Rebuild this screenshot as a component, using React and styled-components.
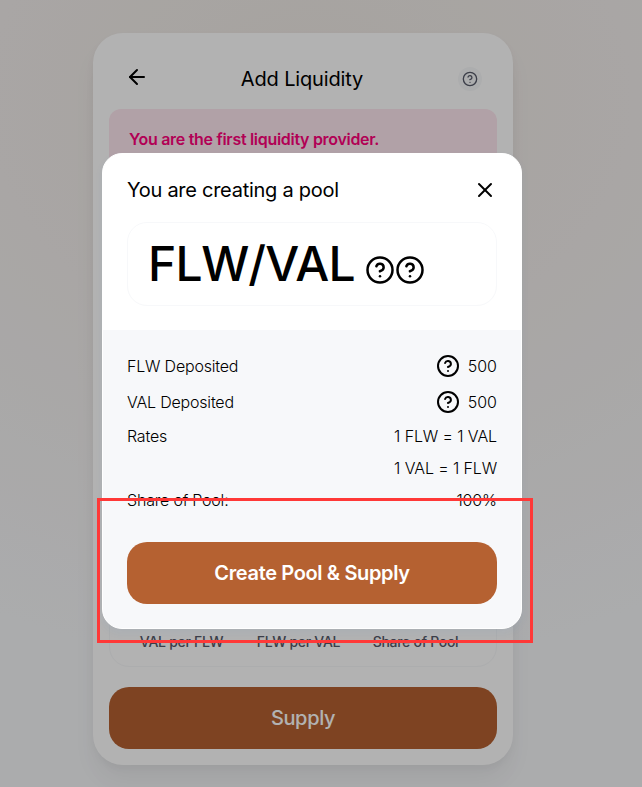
import React from "react";
import styled, { createGlobalStyle } from "styled-components";
import { ArrowLeft, CircleHelp, X } from "lucide-react";

const GlobalStyle = createGlobalStyle`
  * { box-sizing: border-box; }
  body { margin: 0; font-family: Inter, "Liberation Sans", sans-serif; color: #000; }
  button { font-family: inherit; border: 0; padding: 0; }
`;

const Page = styled.main`
  position: relative;
  width: 642px;
  height: 787px;
  overflow: hidden;
  padding: 33px 0 0 93px;
  background: radial-gradient(720px 570px at 310px 100px, #efe9e4 0%, #f2eeec 45%, #f5f6f8 100%);
`;

const Card = styled.section`
  display: flex;
  flex-direction: column;
  width: 420px;
  height: 732px;
  padding: 0 16px 16px;
  border-radius: 30px;
  background: #fff;
  box-shadow: 0 0 1px rgba(0, 0, 0, 0.01), 0 4px 8px rgba(0, 0, 0, 0.04),
    0 16px 24px rgba(0, 0, 0, 0.04), 0 24px 32px rgba(0, 0, 0, 0.01);
`;

const CardHeader = styled.header`
  display: flex;
  align-items: center;
  justify-content: space-between;
  height: 76px;
  flex: none;
  padding: 16px 15px 0 16px;

  > svg { margin-bottom: 4px; }
`;

const CardTitle = styled.h1`
  margin: 0 0 0 -3px;
  font-size: 20px;
  font-weight: 400;
  line-height: 24px;
  letter-spacing: -0.14px;
`;

const HelpButton = styled.button`
  display: flex;
  align-items: center;
  justify-content: center;
  width: 24px;
  height: 24px;
  border-radius: 50%;
  background: #f7f8fa;
  color: #565a69;
`;

const Notice = styled.div`
  height: 110px;
  flex: none;
  padding: 20px;
  border-radius: 12px;
  background: #fee7ef;
  color: #ff007a;
  font-size: 16px;
  font-weight: 600;
  line-height: 20px;
  letter-spacing: -0.3px;
`;

const PriceTable = styled.div`
  display: grid;
  grid-template-columns: repeat(3, 117px);
  align-items: end;
  height: 84px;
  margin-top: auto;
  margin-bottom: 20px;
  padding: 0 0 14px 13px;
  border: 1px solid #f7f8fa;
  border-radius: 20px;
  color: #565a69;
  font-size: 14px;
  font-weight: 450;
  line-height: 20px;
  letter-spacing: -0.28px;
  text-align: center;
`;

const ActionButton = styled.button`
  display: flex;
  align-items: center;
  justify-content: center;
  flex: none;
  width: 100%;
  height: 62px;
  border-radius: 20px;
  background: #b56131;
  color: #fff;
  font-size: 20px;
  font-weight: ${(p) => p.$weight};
  letter-spacing: -0.36px;
`;

const Backdrop = styled.div`
  position: absolute;
  inset: 0;
  padding: 153px 0 0 102px;
  background: rgba(0, 0, 0, 0.3);
`;

const Modal = styled.section`
  display: flex;
  flex-direction: column;
  width: 420px;
  height: 476px;
  overflow: hidden;
  border: 1px solid #fff;
  border-radius: 20px;
  background: #fff;
  box-shadow: 0 4px 8px rgba(47, 128, 237, 0.05);
`;

const ModalTop = styled.div`
  height: 176px;
  padding: 24px;
`;

const ModalHeader = styled.header`
  display: flex;
  align-items: center;
  justify-content: space-between;
  height: 24px;
`;

const ModalTitle = styled.h2`
  margin: 0;
  font-size: 20px;
  font-weight: 400;
  letter-spacing: -0.27px;
`;

const PairBox = styled.div`
  display: flex;
  align-items: center;
  height: 84px;
  margin-top: 20px;
  padding-left: 20px;
  border: 1px solid #f7f8fa;
  border-radius: 20px;
`;

const PairName = styled.div`
  width: 217px;
  font-size: 48px;
  font-weight: 500;
  line-height: 42px;
  letter-spacing: -0.75px;
  white-space: nowrap;
`;

const PairIcons = styled.div`
  display: flex;
  padding-top: 12px;
`;

const ModalBottom = styled.div`
  flex: 1;
  padding: 18px 24px 24px;
  background: #f7f8fa;
`;

const DetailRow = styled.div`
  display: flex;
  align-items: center;
  justify-content: space-between;
  height: ${(p) => p.$height}px;
  font-size: 16px;
  font-weight: 300;
  letter-spacing: -0.2px;
`;

const Amount = styled.span`
  display: flex;
  align-items: center;
  gap: 8px;
  margin-left: auto;
  letter-spacing: ${(p) => (p.$token ? 0 : -0.12)}px;
`;

const ButtonSlot = styled.div`
  margin-top: 26px;
`;

const Highlight = styled.div`
  position: absolute;
  left: 97px;
  top: 498px;
  width: 436px;
  height: 145px;
  border: 3px solid #ff3837;
`;

const details = [
  { label: "FLW Deposited", value: "500", token: true },
  { label: "VAL Deposited", value: "500", token: true },
  { label: "Rates", value: "1 FLW = 1 VAL" },
  { label: "", value: "1 VAL = 1 FLW" },
  { label: "Share of Pool:", value: "100%" },
];

export default function App() {
  return (
    <>
      <GlobalStyle />
      <Page>
        <Card>
          <CardHeader>
            <ArrowLeft size={24} />
            <CardTitle>Add Liquidity</CardTitle>
            <HelpButton aria-label="Help"><CircleHelp size={16} /></HelpButton>
          </CardHeader>
          <Notice>You are the first liquidity provider.</Notice>
          <PriceTable>
            <span>VAL per FLW</span>
            <span>FLW per VAL</span>
            <span>Share of Pool</span>
          </PriceTable>
          <ActionButton $weight={500}>Supply</ActionButton>
        </Card>
        <Backdrop>
          <Modal role="dialog">
            <ModalTop>
              <ModalHeader>
                <ModalTitle>You are creating a pool</ModalTitle>
                <X size={24} />
              </ModalHeader>
              <PairBox>
                <PairName>FLW/VAL</PairName>
                <PairIcons>
                  <CircleHelp size={30} />
                  <CircleHelp size={30} />
                </PairIcons>
              </PairBox>
            </ModalTop>
            <ModalBottom>
              {details.map((d) => (
                <DetailRow key={d.value + d.label} $height={d.token ? 36 : 32}>
                  <span>{d.label}</span>
                  <Amount $token={d.token}>
                    {d.token && <CircleHelp size={24} />}
                    {d.value}
                  </Amount>
                </DetailRow>
              ))}
              <ButtonSlot>
                <ActionButton $weight={600}>Create Pool &amp; Supply</ActionButton>
              </ButtonSlot>
            </ModalBottom>
          </Modal>
        </Backdrop>
        <Highlight />
      </Page>
    </>
  );
}
